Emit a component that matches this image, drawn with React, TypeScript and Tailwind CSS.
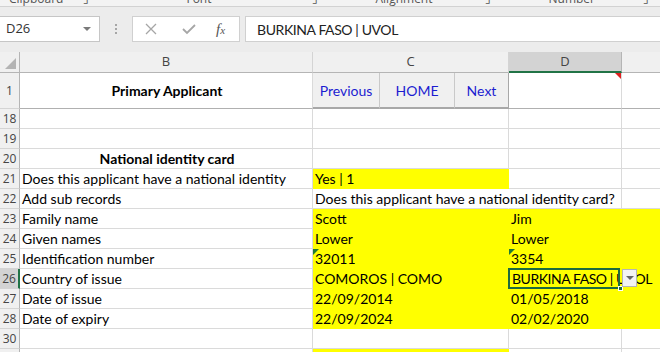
import React from "react";

type CellProps = {
  w: string;
  children?: React.ReactNode;
  className?: string;
};

// one spreadsheet cell: fixed width, gridline on the right and bottom
function Cell({ w, children, className = "" }: CellProps) {
  return (
    <div
      className={`${w} h-full shrink-0 flex items-center pl-[2px] whitespace-nowrap border-r border-b ${className}`}
    >
      {children}
    </div>
  );
}

const GRID = "border-[#dadada]";
const YELLOW = "bg-[#ffff00] border-[#ffff00]";

function RowHead({ n, active }: { n: string; active?: boolean }) {
  return (
    <div
      className={`w-[20px] h-full shrink-0 flex items-center justify-center text-[12px] font-['Open_Sans',sans-serif] text-[#444] border-b border-[#d4d4d4] ${
        active
          ? "bg-[#d3d3d3] border-r-2 border-r-[#217346]"
          : "bg-[#f0f0f0] border-r border-r-[#b5b5b5]"
      }`}
    >
      {n}
    </div>
  );
}

function GreenFlag() {
  return (
    <span className="absolute left-0 top-0 w-0 h-0 border-t-[6px] border-t-[#1f7a35] border-r-[6px] border-r-transparent" />
  );
}

type RowData = {
  n: string;
  b?: string;
  bBold?: boolean;
  c?: string;
  cYellow?: boolean;
  cOverflow?: boolean;
  d?: string;
  dYellow?: boolean;
  eYellow?: boolean;
  flag?: boolean;
};

const rows: RowData[] = [
  { n: "18" },
  { n: "19" },
  { n: "20", b: "National identity card", bBold: true },
  { n: "21", b: "Does this applicant have a national identity", c: "Yes | 1", cYellow: true },
  { n: "22", b: "Add sub records", c: "Does this applicant have a national identity card?", cOverflow: true },
  { n: "23", b: "Family name", c: "Scott", d: "Jim", cYellow: true, dYellow: true, eYellow: true },
  { n: "24", b: "Given names", c: "Lower", d: "Lower", cYellow: true, dYellow: true, eYellow: true },
  { n: "25", b: "Identification number", c: "32011", d: "3354", cYellow: true, dYellow: true, eYellow: true, flag: true },
  { n: "26", b: "Country of issue", c: "COMOROS | COMO", cYellow: true, dYellow: true, eYellow: true },
  { n: "27", b: "Date of issue", c: "22/09/2014", d: "01/05/2018", cYellow: true, dYellow: true, eYellow: true },
  { n: "28", b: "Date of expiry", c: "22/09/2024", d: "02/02/2020", cYellow: true, dYellow: true, eYellow: true },
  { n: "30" },
  { n: "31", cYellow: true },
];

export default function App() {
  return (
    <div className="w-[660px] h-[352px] overflow-hidden bg-white font-['Lato',sans-serif] text-black">
      {/* Ribbon group labels, cut at the top */}
      <div className="h-[7px] overflow-hidden bg-[#f3f3f3] border-b border-[#d2d2d2]">
        <div className="flex items-end h-[7px] text-[12px] leading-[14px] text-[#555] font-['Open_Sans',sans-serif] -mt-[1px]">
          <span className="ml-[9px]">Clipboard</span>
          <span className="ml-[20px]">⌟</span>
          <span className="ml-[97px]">Font</span>
          <span className="ml-[100px]">⌟</span>
          <span className="ml-[58px]">Alignment</span>
          <span className="ml-[52px]">⌟</span>
          <span className="ml-[58px]">Number</span>
          <span className="ml-[48px]">⌟</span>
        </div>
      </div>

      {/* Formula bar */}
      <div className="h-[45px] bg-[#ececec] flex items-start pt-[9px] font-['Open_Sans',sans-serif]">
        <div className="w-[100px] h-[26px] bg-white border border-[#c6c6c6] border-l-0 flex items-center justify-between pl-[6px] pr-[8px] text-[13px] text-[#333]">
          <span>D26</span>
          <span className="w-0 h-0 border-l-[4px] border-r-[4px] border-t-[4px] border-l-transparent border-r-transparent border-t-[#7a7a7a]" />
        </div>
        <div className="w-[32px] h-[26px] flex flex-col items-center justify-center gap-[2px]">
          <span className="w-[2px] h-[2px] bg-[#a6a6a6]" />
          <span className="w-[2px] h-[2px] bg-[#a6a6a6]" />
          <span className="w-[2px] h-[2px] bg-[#a6a6a6]" />
        </div>
        <div className="w-[108px] h-[26px] bg-white border border-[#d0d0d0] flex items-center">
          <svg width="14" height="14" viewBox="0 0 14 14" className="ml-[11px]">
            <path d="M2 2 L12 12 M12 2 L2 12" stroke="#a6a6a6" strokeWidth="1.3" fill="none" />
          </svg>
          <svg width="16" height="14" viewBox="0 0 16 14" className="ml-[23px]">
            <path d="M2 7 L6 11 L14 3" stroke="#a6a6a6" strokeWidth="1.8" fill="none" />
          </svg>
          <span className="ml-[19px] font-['Liberation_Serif',serif] italic text-[15px] text-[#555] leading-none">
            f<span className="text-[11px]">x</span>
          </span>
        </div>
        <div className="flex-1 ml-[5px] h-[26px] bg-white border border-r-0 border-[#d0d0d0] flex items-center pl-[11px] text-[14px] tracking-[-0.4px] font-['Lato',sans-serif] text-[#222]">
          BURKINA FASO | UVOL
        </div>
      </div>

      {/* Column headers */}
      <div className="h-[21px] flex bg-[#f0f0f0] text-[13px] text-[#444] font-['Open_Sans',sans-serif]">
        <div className="w-[20px] shrink-0 border-r border-b border-[#b5b5b5] relative">
          <span className="absolute right-[3px] bottom-[3px] w-0 h-0 border-l-[11px] border-l-transparent border-b-[11px] border-b-[#b4b4b4]" />
        </div>
        <div className="w-[293px] shrink-0 flex items-center justify-center border-r border-r-[#d4d4d4] border-b border-b-[#b5b5b5]">B</div>
        <div className="w-[196px] shrink-0 flex items-center justify-center border-r border-r-[#d4d4d4] border-b border-b-[#b5b5b5]">C</div>
        <div className="w-[113px] shrink-0 flex items-center justify-center bg-[#d3d3d3] border-r border-r-[#b5b5b5] border-b-2 border-b-[#217346]">D</div>
        <div className="flex-1 border-b border-[#b5b5b5]" />
      </div>

      {/* Row 1 with navigation buttons */}
      <div className="h-[36px] flex">
        <RowHead n="1" />
        <Cell w="w-[293px]" className={`${GRID} justify-center font-bold text-[14px] border-b-[#b0b0b0]`}>
          Primary Applicant
        </Cell>
        <div className="w-[196px] shrink-0 flex h-full text-[14px] text-[#1c1cd0]">
          <div className="w-[67px] flex items-center justify-center bg-[#f0f0f0] border-r border-r-[#c9c9c9] border-b-2 border-b-[#a8a8a8]">Previous</div>
          <div className="w-[75px] flex items-center justify-center bg-[#f0f0f0] border-r border-r-[#c9c9c9] border-b-2 border-b-[#a8a8a8]">HOME</div>
          <div className="w-[54px] flex items-center justify-center bg-[#f0f0f0] border-r border-r-[#a8a8a8] border-b-2 border-b-[#a8a8a8]">Next</div>
        </div>
        <div className="w-[113px] shrink-0 h-full relative border-r border-[#dadada] border-b border-b-[#b0b0b0]">
          <span className="absolute right-0 top-0 w-0 h-0 border-t-[6px] border-t-[#e02020] border-l-[6px] border-l-transparent" />
        </div>
        <div className="flex-1 border-b border-[#b0b0b0]" />
      </div>

      {/* Data rows */}
      {rows.map((r) => (
        <div key={r.n} className="h-[20px] flex text-[14px] leading-none">
          <RowHead n={r.n} active={r.n === "26"} />
          <Cell w="w-[293px]" className={`${GRID} ${r.bBold ? "justify-center font-bold" : ""}`}>
            {r.b}
          </Cell>
          <Cell
            w="w-[196px]"
            className={`relative ${r.cYellow ? YELLOW : GRID} ${r.cOverflow ? "border-r-transparent" : ""}`}
          >
            {r.flag && <GreenFlag />}
            <span className="relative z-10">{r.c}</span>
          </Cell>
          <Cell w="w-[113px]" className={`relative ${r.dYellow ? YELLOW : GRID}`}>
            {r.flag && <GreenFlag />}
            {r.n === "26" ? (
              <>
                <span className="relative z-10 pl-[1px] tracking-[-0.45px]">BURKINA FASO | UVOL</span>
                <span className="absolute z-20 -left-[1px] -top-[1px] w-[112px] h-[21px] border-2 border-[#1e6b3f]" />
                <span className="absolute z-30 right-[-2px] bottom-[-3px] w-[5px] h-[5px] bg-[#1e6b3f] border border-white" />
                <span className="absolute z-30 left-[113px] top-[0px] w-[15px] h-[18px] bg-[#f3f3f3] border border-[#b5b5b5] flex items-center justify-center">
                  <span className="w-0 h-0 border-l-[4px] border-r-[4px] border-t-[4px] border-l-transparent border-r-transparent border-t-[#666]" />
                </span>
              </>
            ) : (
              <span className="relative z-10">{r.d}</span>
            )}
          </Cell>
          <div className={`flex-1 h-full border-b ${r.eYellow ? YELLOW : GRID}`} />
        </div>
      ))}
    </div>
  );
}
